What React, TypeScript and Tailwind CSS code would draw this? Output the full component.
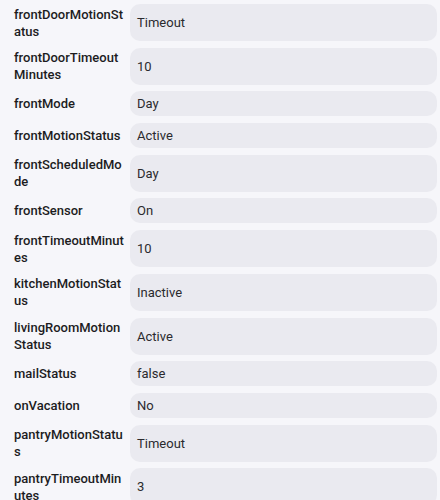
const rows: [string, string][] = [
  ["frontDoorMotionStatus", "Timeout"],
  ["frontDoorTimeoutMinutes", "10"],
  ["frontMode", "Day"],
  ["frontMotionStatus", "Active"],
  ["frontScheduledMode", "Day"],
  ["frontSensor", "On"],
  ["frontTimeoutMinutes", "10"],
  ["kitchenMotionStatus", "Inactive"],
  ["livingRoomMotionStatus", "Active"],
  ["mailStatus", "false"],
  ["onVacation", "No"],
  ["pantryMotionStatus", "Timeout"],
  ["pantryTimeoutMinutes", "3"],
];

export default function App() {
  return (
    <div
      className="min-h-screen bg-[#f6f6fa] pl-[14px] pr-[3px] pt-[4px] text-[13px] leading-[17px]"
      style={{ fontFamily: "Roboto, 'Liberation Sans', sans-serif" }}
    >
      <div className="flex flex-col gap-[6.7px]">
        {rows.map(([k, v]) => (
          <div key={k} className="flex items-stretch">
            <div className="w-[116px] shrink-0 break-all py-[1.5px] pr-[6px] font-medium text-[#1c1c1e] flex items-center">
              {k}
            </div>
            <div className="flex-1 flex items-center rounded-[10px] bg-[#eaeaf0] px-[7px] py-[4px] text-[#2a2a2e]">
              {v}
            </div>
          </div>
        ))}
      </div>
    </div>
  );
}
